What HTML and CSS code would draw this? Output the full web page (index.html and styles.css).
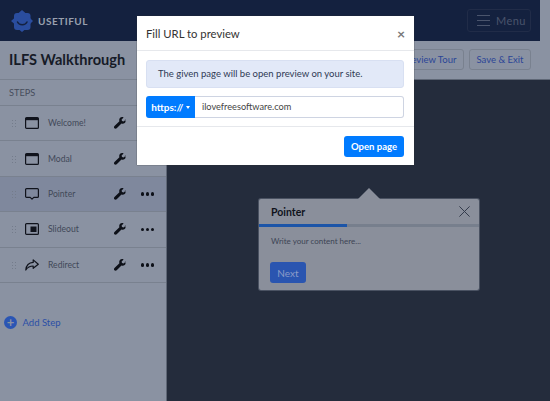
FILE: index.html
```html
<!DOCTYPE html>
<html lang="en">
<head>
  <meta charset="UTF-8" />
  <title>Usetiful</title>
  <link rel="stylesheet" href="styles.css">
</head>
<body>
  <div class="page">
    <div class="navbar">
      <div class="brand">
        <svg width="24" height="24" viewBox="0 0 24 24">
          <path fill="#2a4d9e" d="M8 4.500L12 1l4 3.500zM9 20.500h6L12 23zM4.500 9v6L1 12zM20 9v6l3-3z"/>
          <rect x="4" y="4" width="16.500" height="17" rx="3" fill="#2a4d9e"/>
          <path fill="none" stroke="#14213f" stroke-width="1.500" stroke-linecap="round" d="M7.500 13c1.500 3.500 8 3.500 9.500 0"/>
        </svg>
        <span>USETIFUL</span>
      </div>
      <button class="menu-btn">
        <span class="bars"><i></i><i></i><i></i></span>
        Menu
      </button>
    </div>

    <div class="columns">
      <div class="sidebar">
        <h1>ILFS Walkthrough</h1>
        <div class="steps-label">STEPS</div>

        <div class="step">
          <span class="grip"></span>
          <svg class="step-icon" width="14" height="12" viewBox="0 0 14 12"><rect x=".6" y=".6" width="12.800" height="10.800" rx="1" fill="none" stroke="#10131c" stroke-width="1.200"/><rect x="1" y="1" width="12" height="2.200" fill="#10131c"/></svg>
          <span class="step-name">Welcome!</span>
          <svg class="wrench" width="12" height="12" viewBox="0 0 12 12"><path fill="#0d1018" d="M11.800 2.600L9.700 4.500 8 4.100 7.600 2.500 9.600.4C8.200-.3 6.700.1 5.900 1.100 5.200 2 5 3.200 5.400 4.200L.5 9c-.7.700-.7 1.600-.1 2.300.6.600 1.600.6 2.300 0l4.800-4.800c1.100.4 2.300.2 3.200-.6 1-1 1.300-2.200.1-3.300z"/></svg>
          <span class="dots"><i></i><i></i><i></i></span>
        </div>
        <div class="step">
          <span class="grip"></span>
          <svg class="step-icon" width="14" height="12" viewBox="0 0 14 12"><rect x=".6" y=".6" width="12.800" height="10.800" rx="1" fill="none" stroke="#10131c" stroke-width="1.200"/><rect x="1" y="1" width="12" height="2.200" fill="#10131c"/></svg>
          <span class="step-name">Modal</span>
          <svg class="wrench" width="12" height="12" viewBox="0 0 12 12"><path fill="#0d1018" d="M11.800 2.600L9.700 4.500 8 4.100 7.600 2.500 9.600.4C8.200-.3 6.700.1 5.900 1.100 5.200 2 5 3.200 5.400 4.200L.5 9c-.7.700-.7 1.600-.1 2.300.6.600 1.600.6 2.300 0l4.800-4.800c1.100.4 2.300.2 3.200-.6 1-1 1.300-2.200.1-3.300z"/></svg>
          <span class="dots"><i></i><i></i><i></i></span>
        </div>
        <div class="step active">
          <span class="grip"></span>
          <svg class="step-icon" width="14" height="12" viewBox="0 0 14 12"><path fill="none" stroke="#10131c" stroke-width="1.200" stroke-linejoin="round" d="M1.600.6h10.800a1 1 0 0 1 1 1v6.800a1 1 0 0 1-1 1H8.800L7 11.200 5.200 9.400H1.600a1 1 0 0 1-1-1V1.600a1 1 0 0 1 1-1z"/></svg>
          <span class="step-name">Pointer</span>
          <svg class="wrench" width="12" height="12" viewBox="0 0 12 12"><path fill="#0d1018" d="M11.800 2.600L9.700 4.500 8 4.100 7.600 2.500 9.600.4C8.200-.3 6.700.1 5.900 1.100 5.200 2 5 3.200 5.400 4.200L.5 9c-.7.700-.7 1.600-.1 2.300.6.600 1.600.6 2.300 0l4.800-4.800c1.100.4 2.300.2 3.200-.6 1-1 1.300-2.200.1-3.300z"/></svg>
          <span class="dots"><i></i><i></i><i></i></span>
        </div>
        <div class="step">
          <span class="grip"></span>
          <svg class="step-icon" width="14" height="12" viewBox="0 0 14 12"><rect x=".6" y=".6" width="12.800" height="10.800" rx="1" fill="none" stroke="#10131c" stroke-width="1.200"/><rect x="5.500" y="3.500" width="6" height="5.500" fill="#10131c"/></svg>
          <span class="step-name">Slideout</span>
          <svg class="wrench" width="12" height="12" viewBox="0 0 12 12"><path fill="#0d1018" d="M11.800 2.600L9.700 4.500 8 4.100 7.600 2.500 9.600.4C8.200-.3 6.700.1 5.900 1.100 5.200 2 5 3.200 5.400 4.200L.5 9c-.7.700-.7 1.600-.1 2.300.6.600 1.600.6 2.300 0l4.800-4.800c1.100.4 2.300.2 3.200-.6 1-1 1.300-2.200.1-3.300z"/></svg>
          <span class="dots"><i></i><i></i><i></i></span>
        </div>
        <div class="step">
          <span class="grip"></span>
          <svg class="step-icon" width="14" height="12" viewBox="0 0 14 12"><path fill="none" stroke="#10131c" stroke-width="1.200" stroke-linejoin="round" d="M8.200.9l5.100 4.300-5.100 4.100V7C5 7 2.700 8 .8 11 1.200 7 3.800 3.700 8.200 3.400z"/></svg>
          <span class="step-name">Redirect</span>
          <svg class="wrench" width="12" height="12" viewBox="0 0 12 12"><path fill="#0d1018" d="M11.800 2.600L9.700 4.500 8 4.100 7.600 2.500 9.600.4C8.200-.3 6.700.1 5.900 1.100 5.200 2 5 3.200 5.400 4.200L.5 9c-.7.700-.7 1.600-.1 2.300.6.600 1.600.6 2.300 0l4.800-4.800c1.100.4 2.300.2 3.200-.6 1-1 1.300-2.200.1-3.300z"/></svg>
          <span class="dots"><i></i><i></i><i></i></span>
        </div>

        <div class="add-step">
          <span class="add-icon">+</span>
          Add Step
        </div>
      </div>

      <div class="main">
        <div class="toolbar">
          <button class="tool-btn">Preview Tour</button>
          <button class="tool-btn">Save &amp; Exit</button>
        </div>
      </div>
    </div>

    <div class="tooltip">
      <div class="tooltip-head">
        <span>Pointer</span>
        <svg width="11" height="11" viewBox="0 0 11 11"><path stroke="#333b4b" stroke-width="1" d="M.4.4l10.200 10.200M10.600.4L.4 10.600"/></svg>
      </div>
      <div class="progress"><div class="progress-fill"></div></div>
      <p>Write your content here...</p>
      <button class="next-btn">Next</button>
    </div>

    <div class="modal">
      <div class="modal-head">
        <span>Fill URL to preview</span>
        <span class="modal-close">&times;</span>
      </div>
      <div class="modal-body">
        <div class="alert">The given page will be open preview on your site.</div>
        <div class="url-group">
          <span class="url-prefix">https:// <i class="caret"></i></span>
          <span class="url-input">ilovefreesoftware.com</span>
        </div>
      </div>
      <div class="modal-foot">
        <button class="open-btn">Open page</button>
      </div>
    </div>
  </div>
</body>
</html>
```

FILE: styles.css
```css
body {
  margin: 0;
  font-family: 'Lato', 'Open Sans', sans-serif;
  color: #3c4454;
}
.page {
  position: relative;
  width: 550px;
  height: 401px;
  overflow: hidden;
  background-color: #8a92a2;
  display: flex;
  flex-direction: column;
}
.navbar {
  width: 540px;
  height: 41px;
  box-sizing: border-box;
  padding: 0 9px 0 10px;
  background-color: #14213f;
  display: flex;
  align-items: center;
  justify-content: space-between;
  flex-shrink: 0;
}
.brand {
  display: flex;
  align-items: center;
  gap: 4px;
  color: #99a0ae;
  font-size: 10px;
  font-weight: 700;
  letter-spacing: .5px;
}
.menu-btn {
  width: 64px;
  height: 23px;
  padding: 0 0 0 9px;
  background: none;
  border: 1px solid #212c48;
  border-radius: 3px;
  color: #4a546c;
  font: 400 11px 'Lato', sans-serif;
  letter-spacing: .4px;
  display: flex;
  align-items: center;
  gap: 6px;
}
.bars i {
  display: block;
  width: 13px;
  height: 1.500px;
  margin: 3.500px 0;
  background-color: #4a546c;
}
.columns {
  flex: 1;
  display: flex;
}
.sidebar {
  width: 166px;
  border-right: 1px solid #5f6776;
  background-color: #8a92a2;
}
.sidebar h1 {
  margin: 0;
  height: 38px;
  padding-left: 9px;
  font-size: 14.600px;
  line-height: 38px;
  font-weight: 700;
  color: #161b27;
  border-bottom: 1px solid #79818f;
}
.steps-label {
  height: 25px;
  padding-left: 9px;
  font-size: 9.200px;
  line-height: 25px;
  color: #464d5c;
  border-bottom: 1px solid #79818f;
}
.step {
  height: 34.400px;
  display: flex;
  align-items: center;
  border-bottom: 1px solid #79818f;
  font-size: 8.600px;
  color: #414858;
}
.step.active {
  background-color: #7f889d;
}
.grip {
  width: 5px;
  height: 8px;
  margin-left: 11px;
  background-image: radial-gradient(circle, #747c8b .8px, transparent .9px);
  background-size: 3px 3px;
}
.step-icon {
  margin-left: 9px;
}
.step-name {
  margin-left: 9px;
  flex: 1;
}
.wrench {
  margin-right: 15px;
}
.dots {
  display: flex;
  gap: 1.500px;
  margin-right: 12px;
}
.dots i {
  width: 3.500px;
  height: 3.500px;
  border-radius: 50%;
  background-color: #0d1018;
}
.add-step {
  margin: 33px 0 0 4px;
  display: flex;
  align-items: center;
  gap: 5.500px;
  font-size: 9.500px;
  color: #2a4fa6;
}
.add-icon {
  width: 13px;
  height: 13px;
  border-radius: 50%;
  background-color: #2a55b4;
  color: #8a92a2;
  font-size: 13px;
  font-weight: 700;
  line-height: 13px;
  text-align: center;
}
.main {
  flex: 1;
  background-color: #242c3c;
}
.toolbar {
  height: 39px;
  box-sizing: border-box;
  padding: 8px 19px 0 0;
  background-color: #8a92a2;
  border-bottom: 1px solid #5f6776;
  display: flex;
  justify-content: flex-end;
  gap: 5px;
}
.tool-btn {
  height: 21px;
  padding: 0 6.500px;
  background: none;
  border: 1px solid #79818f;
  border-radius: 3px;
  color: #2a4597;
  font: 400 9.500px 'Lato', sans-serif;
}
.tooltip {
  position: absolute;
  left: 259px;
  top: 199px;
  width: 220px;
  height: 91px;
  background-color: #8a8f9b;
  border-radius: 2px;
  box-shadow: 0 0 0 1px #4a5262;
}
.tooltip::before {
  content: "";
  position: absolute;
  left: 99px;
  top: -11px;
  border-left: 11px solid transparent;
  border-right: 11px solid transparent;
  border-bottom: 11px solid #8a8f9b;
}
.tooltip-head {
  height: 25px;
  padding: 0 9px 0 12px;
  display: flex;
  align-items: center;
  justify-content: space-between;
  font-size: 10.500px;
  font-weight: 700;
  color: #10131c;
}
.progress {
  height: 3px;
  background-color: #777f8d;
}
.progress-fill {
  width: 88px;
  height: 3px;
  background-color: #1c55a8;
}
.tooltip p {
  margin: 8px 0 0 12px;
  font-size: 8px;
  line-height: 12px;
  color: #3c4454;
}
.next-btn {
  margin: 15px 0 0 11px;
  width: 36px;
  height: 21px;
  padding: 0;
  background-color: #2a55b0;
  border: none;
  border-radius: 3px;
  color: #8a9cc8;
  font: 400 10px 'Lato', sans-serif;
}
.modal {
  position: absolute;
  left: 137px;
  top: 16px;
  width: 277px;
  height: 149px;
  background-color: #fff;
  color: #333;
  display: flex;
  flex-direction: column;
  box-shadow: 0 0 1px #333;
}
.modal-head {
  height: 34px;
  padding: 0 9px;
  display: flex;
  align-items: center;
  justify-content: space-between;
  font-size: 11.300px;
  border-bottom: 1px solid #e6e8ec;
}
.modal-close {
  font-size: 14px;
  font-weight: 700;
  color: #777;
}
.modal-body {
  padding: 9px 10px 0 9px;
  height: 66px;
  border-bottom: 1px solid #e6e8ec;
}
.alert {
  height: 26px;
  background-color: #e2e9f8;
  border: 1px solid #d8e0f2;
  border-radius: 3px;
  font-size: 9.500px;
  line-height: 26px;
  padding-left: 11px;
  color: #2f3a55;
  margin-bottom: 8px;
}
.url-group {
  display: flex;
  height: 22px;
  font-size: 9.200px;
}
.url-prefix {
  width: 49px;
  background-color: #007bff;
  border-radius: 3px 0 0 3px;
  color: #fff;
  font-size: 10px;
  font-weight: 700;
  line-height: 22px;
  text-align: center;
}
.caret {
  display: inline-block;
  vertical-align: 2px;
  border-left: 2.500px solid transparent;
  border-right: 2.500px solid transparent;
  border-top: 3px solid #fff;
}
.url-input {
  flex: 1;
  box-sizing: border-box;
  border: 1px solid #ced4e2;
  border-left: none;
  border-radius: 0 3px 3px 0;
  padding-left: 7px;
  line-height: 20px;
  color: #444;
}
.modal-foot {
  flex: 1;
  display: flex;
  justify-content: flex-end;
  align-items: center;
  padding-right: 10px;
}
.open-btn {
  width: 60px;
  height: 21px;
  padding: 0;
  background-color: #007bff;
  border: none;
  border-radius: 3px;
  color: #fff;
  font: 700 9.500px 'Lato', sans-serif;
}
```
